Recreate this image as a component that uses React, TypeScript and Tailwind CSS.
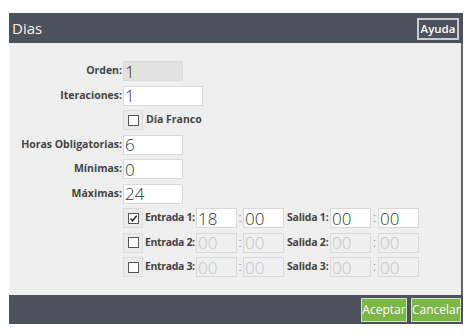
import React from "react";

const font = { fontFamily: "'Open Sans', 'Noto Sans', sans-serif" };

function Field({
  value,
  width,
  disabled,
  readOnly,
}: {
  value: string;
  width: string;
  disabled?: boolean;
  readOnly?: boolean;
}) {
  const bg = readOnly ? "bg-[#e2e2e2]" : disabled ? "bg-[#efefef]" : "bg-white";
  const color = disabled ? "text-[#c4c4c4]" : "text-[#333]";
  return (
    <div
      className={`flex h-[20px] shrink-0 items-center border border-[#d9d9d9] pl-px text-[17px] leading-none font-light ${bg} ${color} ${width}`}
    >
      {value}
    </div>
  );
}

function Check({ checked }: { checked?: boolean }) {
  return (
    <div className="flex h-[20px] w-[20px] shrink-0 items-center justify-center border border-[#dcdcdc] bg-[#ebebeb]">
      <div className="flex h-[11px] w-[11px] items-center justify-center border border-[#555] bg-white">
        {checked && (
          <svg width="9" height="9" viewBox="0 0 9 9">
            <path d="M1.5 4.5 L3.6 6.8 L7.6 1.8" fill="none" stroke="#222" strokeWidth="1.4" />
          </svg>
        )}
      </div>
    </div>
  );
}

const lbl = "whitespace-nowrap text-[10.5px] font-bold text-[#444]";

function Row({ label, children }: { label?: string; children: React.ReactNode }) {
  return (
    <div className="flex h-[20px] items-center">
      <div className={`${lbl} w-[113px] shrink-0 pr-px text-right`}>{label}</div>
      {children}
    </div>
  );
}

function Horario({ n, entrada, salida, active }: { n: number; entrada: string; salida: string; active?: boolean }) {
  return (
    <Row>
      <Check checked={active} />
      <span className={`${lbl} ml-[2px] w-[51px] shrink-0 tracking-[-0.35px]`}>Entrada {n}:</span>
      <Field value={entrada} width="w-[41px]" disabled={!active} />
      <span className="w-[6px] shrink-0 text-center text-[13px] font-light text-[#666]">:</span>
      <Field value="00" width="w-[41px]" disabled={!active} />
      <span className={`${lbl} ml-[3px] w-[43px] shrink-0 tracking-[-0.2px]`}>Salida {n}:</span>
      <Field value={salida} width="w-[41px]" disabled={!active} />
      <span className="w-[7px] shrink-0 text-center text-[13px] font-light text-[#666]">:</span>
      <Field value="00" width="w-[41px]" disabled={!active} />
    </Row>
  );
}

export default function App() {
  return (
    <div className="h-[335px] w-[471px] bg-white pt-[13px] pl-[9px]" style={font}>
      <div className="flex w-[454px] flex-col">
        {/* Header */}
        <div className="flex h-[30px] items-center justify-between bg-[#4d515b] pr-[4px] pl-[3px]">
          <span className="text-[15px] text-[#f2f2f2]">Dias</span>
          <button className="mt-[2px] h-[22px] w-[42px] border-2 border-[#c9cbd0] text-[11.5px] leading-none font-semibold text-white">
            Ayuda
          </button>
        </div>

        {/* Body */}
        <div className="flex h-[252px] flex-col gap-[4.5px] border-r-2 border-l border-r-[#666] border-l-[#f7f7f7] bg-[#efefef] pt-[18px]">
          <Row label="Orden:">
            <Field value="1" width="w-[60px]" readOnly />
          </Row>
          <Row label="Iteraciones:">
            <Field value="1" width="w-[80px]" />
          </Row>
          <Row>
            <Check />
            <span className={`${lbl} ml-[3px]`}>Día Franco</span>
          </Row>
          <Row label="Horas Obligatorias:">
            <Field value="6" width="w-[60px]" />
          </Row>
          <Row label="Mínimas:">
            <Field value="0" width="w-[60px]" />
          </Row>
          <Row label="Máximas:">
            <Field value="24" width="w-[60px]" />
          </Row>
          <Horario n={1} entrada="18" salida="00" active />
          <Horario n={2} entrada="00" salida="00" />
          <Horario n={3} entrada="00" salida="00" />
        </div>

        {/* Footer */}
        <div className="flex h-[29px] items-center justify-end gap-[4px] bg-[#4d515b] pr-[2px]">
          <button className="h-[24px] w-[46px] border border-[#cfe3bb] bg-[#7ab648] text-[12px] leading-none text-white">
            Aceptar
          </button>
          <button className="h-[24px] w-[50px] border border-[#cfe3bb] bg-[#7ab648] text-[12px] leading-none text-white">
            Cancelar
          </button>
        </div>
      </div>
    </div>
  );
}
